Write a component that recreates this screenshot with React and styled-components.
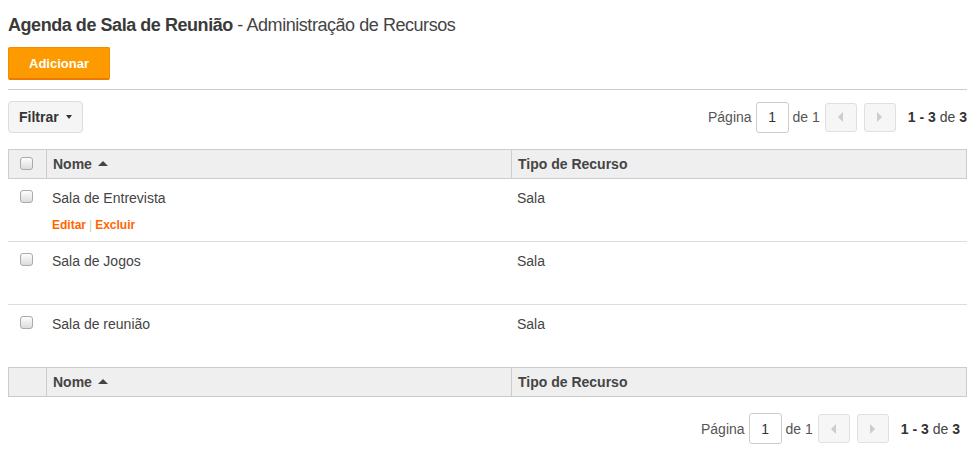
import React from 'react'
import styled, { createGlobalStyle } from 'styled-components'

const GlobalStyle = createGlobalStyle`
  body {
    margin: 0;
    background: #fff;
    font-family: "Liberation Sans", Arial, sans-serif;
    color: #444;
  }
`

const Page = styled.div`
  padding: 8px 8px 0 8px;
`

const Title = styled.h1`
  margin: 6px 0 0 0;
  font-size: 18px;
  line-height: 22px;
  font-weight: normal;
  color: #444;
  letter-spacing: -0.45px;
  b {
    font-weight: bold;
    color: #3a3a3a;
  }
`

const Toolbar = styled.div`
  padding: 11px 0 9px 0;
  border-bottom: 1px solid #ccc;
`

const AddButton = styled.button`
  width: 102px;
  height: 33px;
  background: #fd9a00;
  border: 1px solid #f38c00;
  border-bottom: 2px solid #ee7a00;
  border-radius: 2px;
  color: #fff;
  font-family: inherit;
  font-weight: bold;
  font-size: 13px;
  padding: 0;
  cursor: pointer;
`

const Bar = styled.div`
  display: flex;
  align-items: center;
  justify-content: space-between;
  margin-top: ${p => p.$top || 0}px;
  padding-right: ${p => p.$right || 0}px;
`

const FilterButton = styled.button`
  display: flex;
  align-items: center;
  gap: 7px;
  height: 32px;
  padding: 0 10px;
  background: #f5f5f5;
  border: 1px solid #ddd;
  border-radius: 4px;
  font-family: inherit;
  font-weight: bold;
  font-size: 14px;
  color: #333;
  &::after {
    content: '';
    border-left: 3px solid transparent;
    border-right: 3px solid transparent;
    border-top: 4px solid #333;
  }
`

const Pager = styled.div`
  display: flex;
  align-items: center;
  font-size: 14px;
  color: #555;
  margin-left: auto;
`

const PageInput = styled.div`
  width: 31px;
  height: 29px;
  border: 1px solid #ccc;
  border-radius: 3px;
  display: flex;
  align-items: center;
  justify-content: center;
  color: #333;
  margin: 0 4px;
`

const NavButton = styled.div`
  width: 30px;
  height: 27px;
  background: #f6f6f6;
  border: 1px solid #e0e0e0;
  border-radius: 3px;
  display: flex;
  align-items: center;
  justify-content: center;
  margin-left: ${p => p.$gap}px;
  &::after {
    content: '';
    border-top: 5px solid transparent;
    border-bottom: 5px solid transparent;
    ${p => (p.$dir === 'left' ? 'border-right' : 'border-left')}: 5px solid #ccc;
  }
`

const Count = styled.span`
  margin-left: 12px;
  color: #444;
  b {
    color: #333;
  }
`

const Table = styled.div`
  margin-top: 16px;
`

const HeadRow = styled.div`
  display: grid;
  grid-template-columns: 37px 465px 1fr;
  height: 28px;
  background: #efefef;
  border: 1px solid #ccc;
`

const HeadCell = styled.div`
  display: flex;
  align-items: center;
  padding-bottom: 1px;
  font-weight: bold;
  font-size: 14px;
  color: #444;
  border-left: ${p => (p.$first ? 'none' : '1px solid #ccc')};
  padding-left: ${p => (p.$first ? 11 : 6)}px;
`

const SortCaret = styled.span`
  margin-left: 6px;
  border-left: 5px solid transparent;
  border-right: 5px solid transparent;
  border-bottom: 5px solid #444;
`

const Check = styled.span`
  width: 11px;
  height: 11px;
  border: 1px solid #aaa;
  border-radius: 3px;
  background: linear-gradient(#fdfdfd, #dcdcdc);
  display: inline-block;
`

const Row = styled.div`
  display: grid;
  grid-template-columns: 38px 465px 1fr;
  height: 62px;
  border-bottom: ${p => (p.$last ? 'none' : '1px solid #ddd')};
`

const Cell = styled.div`
  padding-top: 9px;
  padding-left: ${p => p.$pad || 0}px;
  font-size: 14px;
  line-height: 20px;
  color: #444;
  display: flex;
  flex-direction: column;
  align-items: flex-start;
`

const CheckWrap = styled.div`
  height: 20px;
  display: flex;
  align-items: center;
  margin-top: -2px;
`

const Actions = styled.div`
  margin-top: 10px;
  font-size: 12px;
  line-height: 14px;
  font-weight: bold;
  color: #f60;
  display: flex;
  gap: 3px;
  span {
    color: #ccc;
    font-weight: normal;
  }
`

const rows = [
  { name: 'Sala de Entrevista', type: 'Sala', actions: true },
  { name: 'Sala de Jogos', type: 'Sala' },
  { name: 'Sala de reunião', type: 'Sala' },
]

function Pagination() {
  return (
    <Pager>
      Página
      <PageInput>1</PageInput>
      de 1
      <NavButton $dir="left" $gap={5} />
      <NavButton $dir="right" $gap={7} />
      <Count>
        <b>1 - 3</b> de <b>3</b>
      </Count>
    </Pager>
  )
}

function Header({ withCheck }) {
  return (
    <HeadRow>
      <HeadCell $first>{withCheck && <Check />}</HeadCell>
      <HeadCell>
        Nome <SortCaret />
      </HeadCell>
      <HeadCell>Tipo de Recurso</HeadCell>
    </HeadRow>
  )
}

export default function App() {
  return (
    <Page>
      <GlobalStyle />
      <Title>
        <b>Agenda de Sala de Reunião</b> - Administração de Recursos
      </Title>
      <Toolbar>
        <AddButton>Adicionar</AddButton>
      </Toolbar>
      <Bar $top={11}>
        <FilterButton>Filtrar</FilterButton>
        <Pagination />
      </Bar>
      <Table>
        <Header withCheck />
        {rows.map((r, i) => (
          <Row key={r.name} $last={i === rows.length - 1}>
            <Cell $pad={12}>
              <CheckWrap>
                <Check />
              </CheckWrap>
            </Cell>
            <Cell $pad={6}>
              {r.name}
              {r.actions && (
                <Actions>
                  Editar<span>|</span>Excluir
                </Actions>
              )}
            </Cell>
            <Cell $pad={6}>{r.type}</Cell>
          </Row>
        ))}
        <Header />
      </Table>
      <Bar $top={16} $right={7}>
        <Pagination />
      </Bar>
    </Page>
  )
}
